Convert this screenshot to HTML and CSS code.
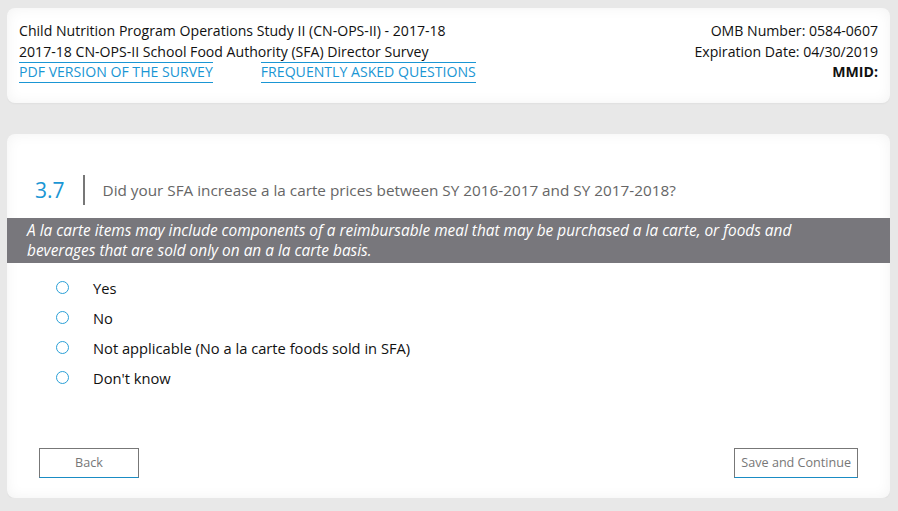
FILE: index.html
```html
<!DOCTYPE html>
<html lang="en">
<head>
  <meta charset="UTF-8" />
  <meta name="viewport" content="width=device-width, initial-scale=1.0" />
  <title>CN-OPS-II SFA Director Survey</title>
  <link rel="stylesheet" href="styles.css">
</head>
<body>
  <div class="card header">
    <div class="header-left">
      <div>Child Nutrition Program Operations Study II (CN-OPS-II) - 2017-18</div>
      <div>2017-18 CN-OPS-II School Food Authority (SFA) Director Survey</div>
      <div class="links">
        <a href="#">PDF VERSION OF THE SURVEY</a>
        <a href="#">FREQUENTLY ASKED QUESTIONS</a>
      </div>
    </div>
    <div class="header-right">
      <div>OMB Number: 0584-0607</div>
      <div>Expiration Date: 04/30/2019</div>
      <div class="mmid">MMID:</div>
    </div>
  </div>

  <div class="card question">
    <div class="question-title">
      <span class="q-number">3.7</span>
      <span class="q-text">Did your SFA increase a la carte prices between SY 2016-2017 and SY 2017-2018?</span>
    </div>
    <div class="note">
      A la carte items may include components of a reimbursable meal that may be purchased a la carte, or foods and beverages that are sold only on an a la carte basis.
    </div>
    <div class="options">
      <label class="option"><input type="radio" name="q37" /><span>Yes</span></label>
      <label class="option"><input type="radio" name="q37" /><span>No</span></label>
      <label class="option"><input type="radio" name="q37" /><span>Not applicable (No a la carte foods sold in SFA)</span></label>
      <label class="option"><input type="radio" name="q37" /><span>Don't know</span></label>
    </div>
    <div class="buttons">
      <button class="btn back">Back</button>
      <button class="btn">Save and Continue</button>
    </div>
  </div>
</body>
</html>
```

FILE: styles.css
```css
body {
  margin: 8px 8px 0 7px;
  background-color: #e8e8e8;
  font-family: "Open Sans", sans-serif;
  font-size: 14.1px;
  color: #111;
}
.card {
  background-color: #fff;
  border-radius: 8px;
  box-shadow: inset 0 0 14px rgba(0, 0, 0, 0.05), 0 1px 2px rgba(0, 0, 0, 0.04);
}
.header {
  display: flex;
  justify-content: space-between;
  padding: 13px 12px 20px 12px;
  line-height: 20.5px;
}
.links {
  display: flex;
  gap: 48px;
}
.links a {
  color: #1a96d4;
  text-decoration: none;
  border-top: 1px solid #1a96d4;
  border-bottom: 1px solid #1a96d4;
  line-height: 18.5px;
}
.header-right {
  text-align: right;
}
.mmid {
  font-weight: bold;
}
.question {
  margin-top: 31px;
  padding: 41px 0 20px 0;
}
.question-title {
  display: flex;
  align-items: center;
  padding-left: 28px;
}
.q-number {
  font-size: 21px;
  color: #1a96d4;
  padding: 0 18px 0 0;
  border-right: 2px solid #777;
  line-height: 30px;
  margin-right: 18px;
}
.q-text {
  color: #666;
  font-size: 15.3px;
}
.note {
  margin-top: 13px;
  background-color: #78777c;
  color: #fff;
  font-style: italic;
  font-size: 15.4px;
  line-height: 20px;
  padding: 3px 70px 2px 20px;
}
.options {
  padding: 10px 0 0 41px;
}
.option {
  display: flex;
  align-items: center;
  height: 30px;
}
.option input {
  appearance: none;
  width: 13px;
  height: 13px;
  margin: 0 24px 0 8px;
  border: 1.5px solid #2a9fd6;
  border-radius: 50%;
}
.option span {
  font-size: 14.7px;
}
.buttons {
  display: flex;
  justify-content: space-between;
  padding: 0 32px;
  margin-top: 55px;
}
.btn {
  font-family: "Open Sans", sans-serif;
  font-size: 12.6px;
  color: #777;
  background-color: #fff;
  border: 1px solid #777;
  border-bottom-color: #1a8cc4;
  height: 30px;
  padding: 0 6px;
}
.back {
  width: 100px;
}
```
